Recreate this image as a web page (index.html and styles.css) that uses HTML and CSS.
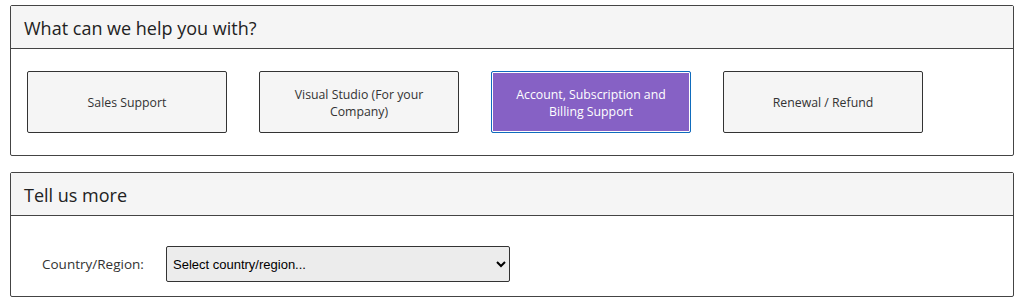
FILE: index.html
```html
<!DOCTYPE html>
<html lang="en">
<head>
    <meta charset="UTF-8">
    <title>Support</title>
    <link rel="stylesheet" href="styles.css">
</head>

<body>
    <section class="panel">
        <h2 class="panel-header">What can we help you with?</h2>
        <div class="panel-body topics">
            <button class="topic">Sales Support</button>
            <button class="topic">Visual Studio (For your Company)</button>
            <button class="topic selected">Account, Subscription and Billing Support</button>
            <button class="topic">Renewal / Refund</button>
        </div>
    </section>

    <section class="panel">
        <h2 class="panel-header">Tell us more</h2>
        <div class="panel-body more">
            <label class="field-label" for="country">Country/Region:</label>
            <select id="country" class="country">
                <option>Select country/region...</option>
            </select>
        </div>
    </section>
</body>
</html>
```

FILE: styles.css
```css
* {
    box-sizing: border-box;
}

body {
    margin: 5px 8px 0 10px;
    font-family: 'Open Sans', 'Noto Sans', sans-serif;
    color: #333;
    background: #fff;
}

.panel {
    border: 1px solid #444;
    border-radius: 2px;
    margin-bottom: 16px;
}

.panel-header {
    margin: 0;
    height: 43px;
    padding: 1px 0 0 13px;
    display: flex;
    align-items: center;
    font-size: 18px;
    font-weight: normal;
    color: #222;
    background: #f5f5f5;
    border-bottom: 1px solid #444;
}

.topics {
    display: flex;
    gap: 32px;
    padding: 22px 16px 22px 16px;
}

.topic {
    width: 200px;
    height: 62px;
    padding: 1px 24px 0;
    border: 1px solid #333;
    border-radius: 2px;
    background: #f5f5f5;
    font-family: 'Open Sans', 'Noto Sans', sans-serif;
    font-size: 12.3px;
    line-height: 17px;
    color: #333;
}

.topic.selected {
    background: #8661c5;
    color: #fff;
    border: 1px solid #0f6cbd;
    box-shadow: inset 0 0 0 1px #fff;
}

.more {
    display: flex;
    align-items: center;
    padding: 30px 16px 14px 31px;
}

.field-label {
    width: 124px;
    font-size: 13.5px;
    color: #333;
}

.country {
    width: 344px;
    height: 36px;
    padding: 0 2px;
    border: 1px solid #333;
    border-radius: 2px;
    background: #ececec;
    font-family: 'Liberation Sans', Arial, sans-serif;
    font-size: 13px;
    color: #000;
}
```
